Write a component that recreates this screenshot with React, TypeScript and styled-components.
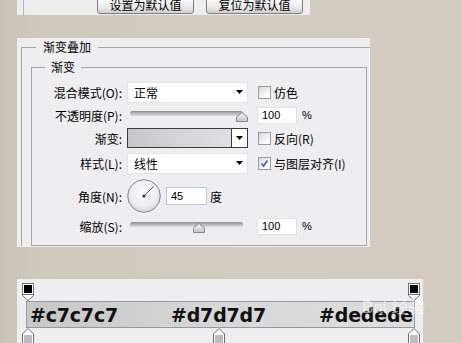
import React from 'react';
import styled, { createGlobalStyle } from 'styled-components';

const Global = createGlobalStyle`
  html, body { margin: 0; padding: 0; }
  body {
    width: 462px;
    height: 343px;
    overflow: hidden;
    background: linear-gradient(90deg, #cbc2b6 0px, #d2c9bd 40px, #d5ccc1 100%);
    font-family: "Noto Sans CJK SC", "Liberation Sans", sans-serif;
    font-size: 12px;
    color: #000;
  }
`;

const Page = styled.div`
  display: flex;
  flex-direction: column;
  padding-left: 17px;
`;

const TopPanel = styled.div`
  width: 293px;
  height: 15px;
  background: #eeedf0;
  display: flex;
  overflow: hidden;
`;

const TopInner = styled.div`
  margin-left: 6px;
  flex: 1;
  border-left: 1px solid #b4b4b8;
  display: flex;
  align-items: flex-end;
  padding-left: 73px;
  gap: 12px;
`;

const PsButton = styled.div`
  flex: none;
  width: 95px;
  height: 15px;
  margin-bottom: 1px;
  border: 1px solid #7c7c7c;
  border-radius: 3px;
  background: linear-gradient(#fdfdfd, #ececec 55%, #d0d0d0);
  font-size: 12px;
  line-height: 13px;
  text-align: center;
  white-space: nowrap;
`;

const MainPanel = styled.div`
  margin-top: 23px;
  width: 353px;
  height: 209px;
  background: #eeedf0;
  overflow: hidden;
`;

const OuterSet = styled.fieldset`
  margin: 2px 0 0 4px;
  padding: 6px 3px 0 9px;
  border: 1px solid #a5a5a8;
  border-right: none;
  border-bottom: none;
  min-width: 0;
`;

const InnerSet = styled.fieldset`
  margin: 0;
  padding: 6px 0 9px 0;
  border: 1px solid #a5a5a8;
  min-width: 0;
`;

const Legend = styled.legend<{ $ml: number; $px: number }>`
  margin-left: ${(p) => p.$ml}px;
  padding: 0 ${(p) => p.$px}px;
  font-size: 12px;
  line-height: 14px;
`;

const Row = styled.div<{ $h: number }>`
  display: flex;
  align-items: center;
  height: ${(p) => p.$h}px;
`;

const Label = styled.div`
  width: 90px;
  flex: none;
  text-align: right;
  white-space: nowrap;
  margin-right: 5px;
`;

const Select = styled.div`
  width: 121px;
  height: 21px;
  flex: none;
  box-sizing: border-box;
  background: #fff;
  border: 1px solid #e4e4e6;
  display: flex;
  align-items: center;
  justify-content: space-between;
  padding: 0 4px 0 6px;
`;

const Arrow = () => (
  <svg width="7" height="4" viewBox="0 0 7 4">
    <polygon points="0,0 7,0 3.5,4" fill="#000" />
  </svg>
);

const Check = styled.div<{ $gap: number }>`
  display: flex;
  align-items: center;
  margin-left: ${(p) => p.$gap}px;
  white-space: nowrap;
  gap: 3px;
`;

const Box = styled.div`
  width: 13px;
  height: 13px;
  box-sizing: border-box;
  border: 1px solid #9c9ca0;
  background: linear-gradient(135deg, #d6d6d8, #fafafa 70%);
  display: flex;
  align-items: center;
  justify-content: center;
`;

const CheckBox = ({ checked }: { checked?: boolean }) => (
  <Box>
    {checked && (
      <svg width="9" height="9" viewBox="0 0 9 9">
        <path d="M1.5 4.5 L3.5 7 L7.5 1.5" stroke="#55679a" strokeWidth="1.8" fill="none" />
      </svg>
    )}
  </Box>
);

const SliderBox = styled.div`
  position: relative;
  width: 121px;
  height: 10px;
  flex: none;
  margin-top: 2px;
`;

const Track = styled.div`
  margin-left: 3px;
  width: 113px;
  height: 5px;
  border-radius: 3px;
  background: linear-gradient(#8e8e90, #bcbcbe 55%, #dcdcde);
`;

const Thumb = styled.svg`
  position: absolute;
  top: 1px;
`;

const Slider = ({ pos }: { pos: number }) => (
  <SliderBox>
    <Track />
    <Thumb width="12" height="10" viewBox="0 0 12 10" style={{ left: 3 + pos * 106 }}>
      <defs>
        <linearGradient id="tg" x1="0" y1="0" x2="0" y2="1">
          <stop offset="0" stopColor="#f6f6f6" />
          <stop offset="1" stopColor="#c4c4c6" />
        </linearGradient>
      </defs>
      <polygon points="6,0.5 11.5,5 11.5,9.5 0.5,9.5 0.5,5" fill="url(#tg)" stroke="#88888a" />
    </Thumb>
  </SliderBox>
);

const NumInput = styled.div<{ $gap: number; $w: number; $h: number; $blue?: boolean }>`
  margin-left: ${(p) => p.$gap}px;
  width: ${(p) => p.$w}px;
  height: ${(p) => p.$h}px;
  flex: none;
  box-sizing: border-box;
  background: #fff;
  border: 1px solid ${(p) => (p.$blue ? '#b6cbe0' : '#e2e2e4')};
  font-family: "Liberation Sans", sans-serif;
  font-size: 11px;
  display: flex;
  align-items: center;
  padding-left: 4px;
`;

const Unit = styled.div<{ $latin?: boolean }>`
  margin-left: ${(p) => (p.$latin ? 5 : 3)}px;
  font-family: ${(p) => (p.$latin ? '"Liberation Sans", sans-serif' : 'inherit')};
  font-size: ${(p) => (p.$latin ? 11 : 12)}px;
`;

const GradPick = styled.div`
  width: 121px;
  height: 20px;
  flex: none;
  box-sizing: border-box;
  border: 1px solid #3a3a3a;
  display: flex;
`;

const GradPreview = styled.div`
  flex: 1;
  background: linear-gradient(90deg, #c6c6c8, #d6d6d8 50%, #dfdfe1);
  border-right: 1px solid #3a3a3a;
`;

const GradButton = styled.div`
  width: 15px;
  background: #fff;
  display: flex;
  align-items: center;
  justify-content: center;
`;

const Dial = () => (
  <svg width="34" height="34" viewBox="0 0 34 34" style={{ flex: 'none' }}>
    <defs>
      <radialGradient id="dg" cx="0.5" cy="0.4" r="0.6">
        <stop offset="0" stopColor="#ffffff" />
        <stop offset="0.7" stopColor="#ececee" />
        <stop offset="1" stopColor="#d4d4d7" />
      </radialGradient>
    </defs>
    <circle cx="17" cy="17" r="16.3" fill="url(#dg)" stroke="#848488" strokeWidth="1" />
    <line x1="17" y1="17" x2="26.5" y2="7.5" stroke="#555" strokeWidth="1" />
    <circle cx="17" cy="17" r="1.6" fill="#333" />
  </svg>
);

const BottomPanel = styled.div`
  position: relative;
  margin-top: 32px;
  width: 406px;
  height: 70px;
  background: #eeedf0;
  padding: 4px 8px 0 9px;
  box-sizing: border-box;
  display: flex;
  flex-direction: column;
`;

const StopTrack = styled.div<{ $h: number }>`
  position: relative;
  height: ${(p) => p.$h}px;
`;

const Stop = styled.svg`
  position: absolute;
  top: 0;
  transform: translateX(-50%);
`;

const ColorStop = ({ at }: { at: number }) => (
  <Stop width="12" height="18" viewBox="0 0 12 18" style={{ left: `${at}%` }}>
    <polygon points="0.5,11.5 11.5,11.5 11.5,12.5 6,17.5 0.5,12.5" fill="#fff" stroke="#6e6e70" />
    <rect x="0.5" y="0.5" width="11" height="11" fill="#fff" stroke="#6e6e70" />
    <rect x="2" y="2" width="8" height="8" fill="#000" />
  </Stop>
);

const OpacityStop = ({ at }: { at: number }) => (
  <Stop width="12" height="16" viewBox="0 0 12 16" style={{ left: `${at}%` }}>
    <polygon points="6,0.5 11.5,6 11.5,15.5 0.5,15.5 0.5,6" fill="#fff" stroke="#6e6e70" />
    <rect x="2" y="7" width="8" height="8" fill="#bdbdbf" />
  </Stop>
);

const Bar = styled.div`
  height: 27px;
  box-sizing: border-box;
  border: 1px solid #98989a;
  background: linear-gradient(90deg, #c7c7c7, #d7d7d7 50%, #dedede);
  display: flex;
  align-items: center;
  justify-content: space-between;
  padding: 0 1px 0 3px;
  font-family: "DejaVu Sans", Verdana, sans-serif;
  font-weight: bold;
  font-size: 19px;
  color: #111;
  letter-spacing: -0.2px;
`;

const Watermark = styled.div`
  position: absolute;
  left: 345px;
  top: 14px;
  font-family: "Liberation Sans", "Noto Sans CJK SC", sans-serif;
  font-size: 17px;
  color: rgba(255, 255, 255, 0.55);
  white-space: nowrap;
`;

export default function App() {
  return (
    <>
      <Global />
      <Page>
        <TopPanel>
          <TopInner>
            <PsButton>设置为默认值</PsButton>
            <PsButton>复位为默认值</PsButton>
          </TopInner>
        </TopPanel>

        <MainPanel>
          <OuterSet>
            <Legend $ml={5} $px={7}>渐变叠加</Legend>
            <InnerSet>
              <Legend $ml={13} $px={6}>渐变</Legend>
              <Row $h={24}>
                <Label>混合模式(O):</Label>
                <Select>
                  <span>正常</span>
                  <Arrow />
                </Select>
                <Check $gap={10}>
                  <CheckBox />
                  <span>仿色</span>
                </Check>
              </Row>
              <Row $h={22}>
                <Label>不透明度(P):</Label>
                <Slider pos={1} />
                <NumInput $gap={9} $w={40} $h={17}>100</NumInput>
                <Unit $latin>%</Unit>
              </Row>
              <Row $h={24}>
                <Label>渐变:</Label>
                <GradPick>
                  <GradPreview />
                  <GradButton>
                    <Arrow />
                  </GradButton>
                </GradPick>
                <Check $gap={10}>
                  <CheckBox />
                  <span>反向(R)</span>
                </Check>
              </Row>
              <Row $h={26}>
                <Label>样式(L):</Label>
                <Select>
                  <span>线性</span>
                  <Arrow />
                </Select>
                <Check $gap={10}>
                  <CheckBox checked />
                  <span>与图层对齐(I)</span>
                </Check>
              </Row>
              <Row $h={40}>
                <Label>角度(N):</Label>
                <Dial />
                <NumInput $gap={5} $w={41} $h={18} $blue>45</NumInput>
                <Unit>度</Unit>
              </Row>
              <Row $h={20}>
                <Label>缩放(S):</Label>
                <Slider pos={0.59} />
                <NumInput $gap={9} $w={40} $h={17}>100</NumInput>
                <Unit $latin>%</Unit>
              </Row>
            </InnerSet>
          </OuterSet>
        </MainPanel>

        <BottomPanel>
          <StopTrack $h={18}>
            <ColorStop at={0.4} />
            <ColorStop at={99.7} />
          </StopTrack>
          <Bar>
            <span>#c7c7c7</span>
            <span>#d7d7d7</span>
            <span>#dedede</span>
          </Bar>
          <StopTrack $h={16}>
            <OpacityStop at={0.4} />
            <OpacityStop at={49.6} />
            <OpacityStop at={99.7} />
          </StopTrack>
          <Watermark>Bai 经验</Watermark>
        </BottomPanel>
      </Page>
    </>
  );
}
